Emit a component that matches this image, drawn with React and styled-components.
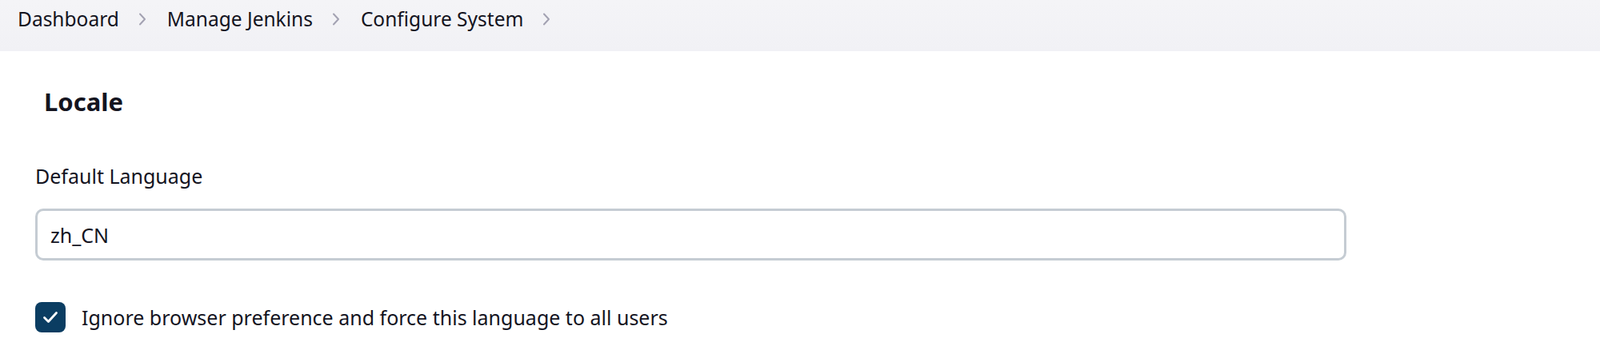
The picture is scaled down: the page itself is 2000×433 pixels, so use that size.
import React from 'react'
import styled, { createGlobalStyle } from 'styled-components'

const GlobalStyle = createGlobalStyle`
  html, body {
    margin: 0;
    padding: 0;
    background: #ffffff;
  }
  body {
    font-family: "Noto Sans", "Open Sans", sans-serif;
    color: #14141f;
  }
`

const crumbs = ['Dashboard', 'Manage Jenkins', 'Configure System']

const Chevron = () => (
  <ChevronBox>
    <svg width="14" height="20" viewBox="0 0 14 20" fill="none">
      <path d="M4 3.5 L10 10 L4 16.5" stroke="#a3a2b2" strokeWidth="2" strokeLinecap="round" strokeLinejoin="round" />
    </svg>
  </ChevronBox>
)

const App = () => {
  return (
    <>
      <GlobalStyle />
      <Breadcrumbs>
        {crumbs.map((c) => (
          <Crumb key={c}>
            <CrumbLink>{c}</CrumbLink>
            <Chevron />
          </Crumb>
        ))}
      </Breadcrumbs>
      <Main>
        <SectionTitle>Locale</SectionTitle>
        <Field>
          <Label>Default Language</Label>
          <TextInput defaultValue="zh_CN" />
        </Field>
        <CheckRow>
          <CheckBox>
            <svg width="24" height="24" viewBox="0 0 24 24" fill="none">
              <path d="M4.5 12.5 L9.5 17.5 L19.5 6.5" stroke="#ffffff" strokeWidth="2.8" strokeLinecap="round" strokeLinejoin="round" />
            </svg>
          </CheckBox>
          <CheckLabel>Ignore browser preference and force this language to all users</CheckLabel>
        </CheckRow>
      </Main>
    </>
  )
}

const Breadcrumbs = styled.div`
  display: flex;
  align-items: flex-start;
  height: 64px;
  box-sizing: border-box;
  padding: 4px 0 0 22px;
  background: linear-gradient(#f4f4f7, #f1f1f5);
`

const Crumb = styled.div`
  display: flex;
  align-items: center;
`

const CrumbLink = styled.span`
  font-size: 24.5px;
  line-height: 40px;
  color: #14141f;
`

const ChevronBox = styled.span`
  display: flex;
  align-items: center;
  margin: 0 24px 0 22px;
`

const Main = styled.div`
  padding: 0 0 0 44px;
  width: 1639px;
`

const SectionTitle = styled.h2`
  margin: 39px 0 0 11px;
  font-size: 31px;
  font-weight: 700;
  line-height: 48px;
  color: #14141f;
`

const Field = styled.div`
  display: flex;
  flex-direction: column;
  margin-top: 51px;
`

const Label = styled.label`
  font-size: 25px;
  line-height: 36px;
  color: #14141f;
`

const TextInput = styled.input`
  margin-top: 23px;
  height: 65px;
  box-sizing: border-box;
  border: 3px solid #c5ccd3;
  border-radius: 10px;
  padding: 0 16px;
  font-family: "Noto Sans", "Open Sans", sans-serif;
  font-size: 25px;
  color: #14141f;
  outline: none;
`

const CheckRow = styled.div`
  display: flex;
  align-items: center;
  gap: 20px;
  margin-top: 52px;
`

const CheckBox = styled.span`
  display: flex;
  align-items: center;
  justify-content: center;
  width: 38px;
  height: 38px;
  border-radius: 8px;
  background: #0b3d62;
`

const CheckLabel = styled.span`
  font-size: 25px;
  color: #14141f;
`

export default App
